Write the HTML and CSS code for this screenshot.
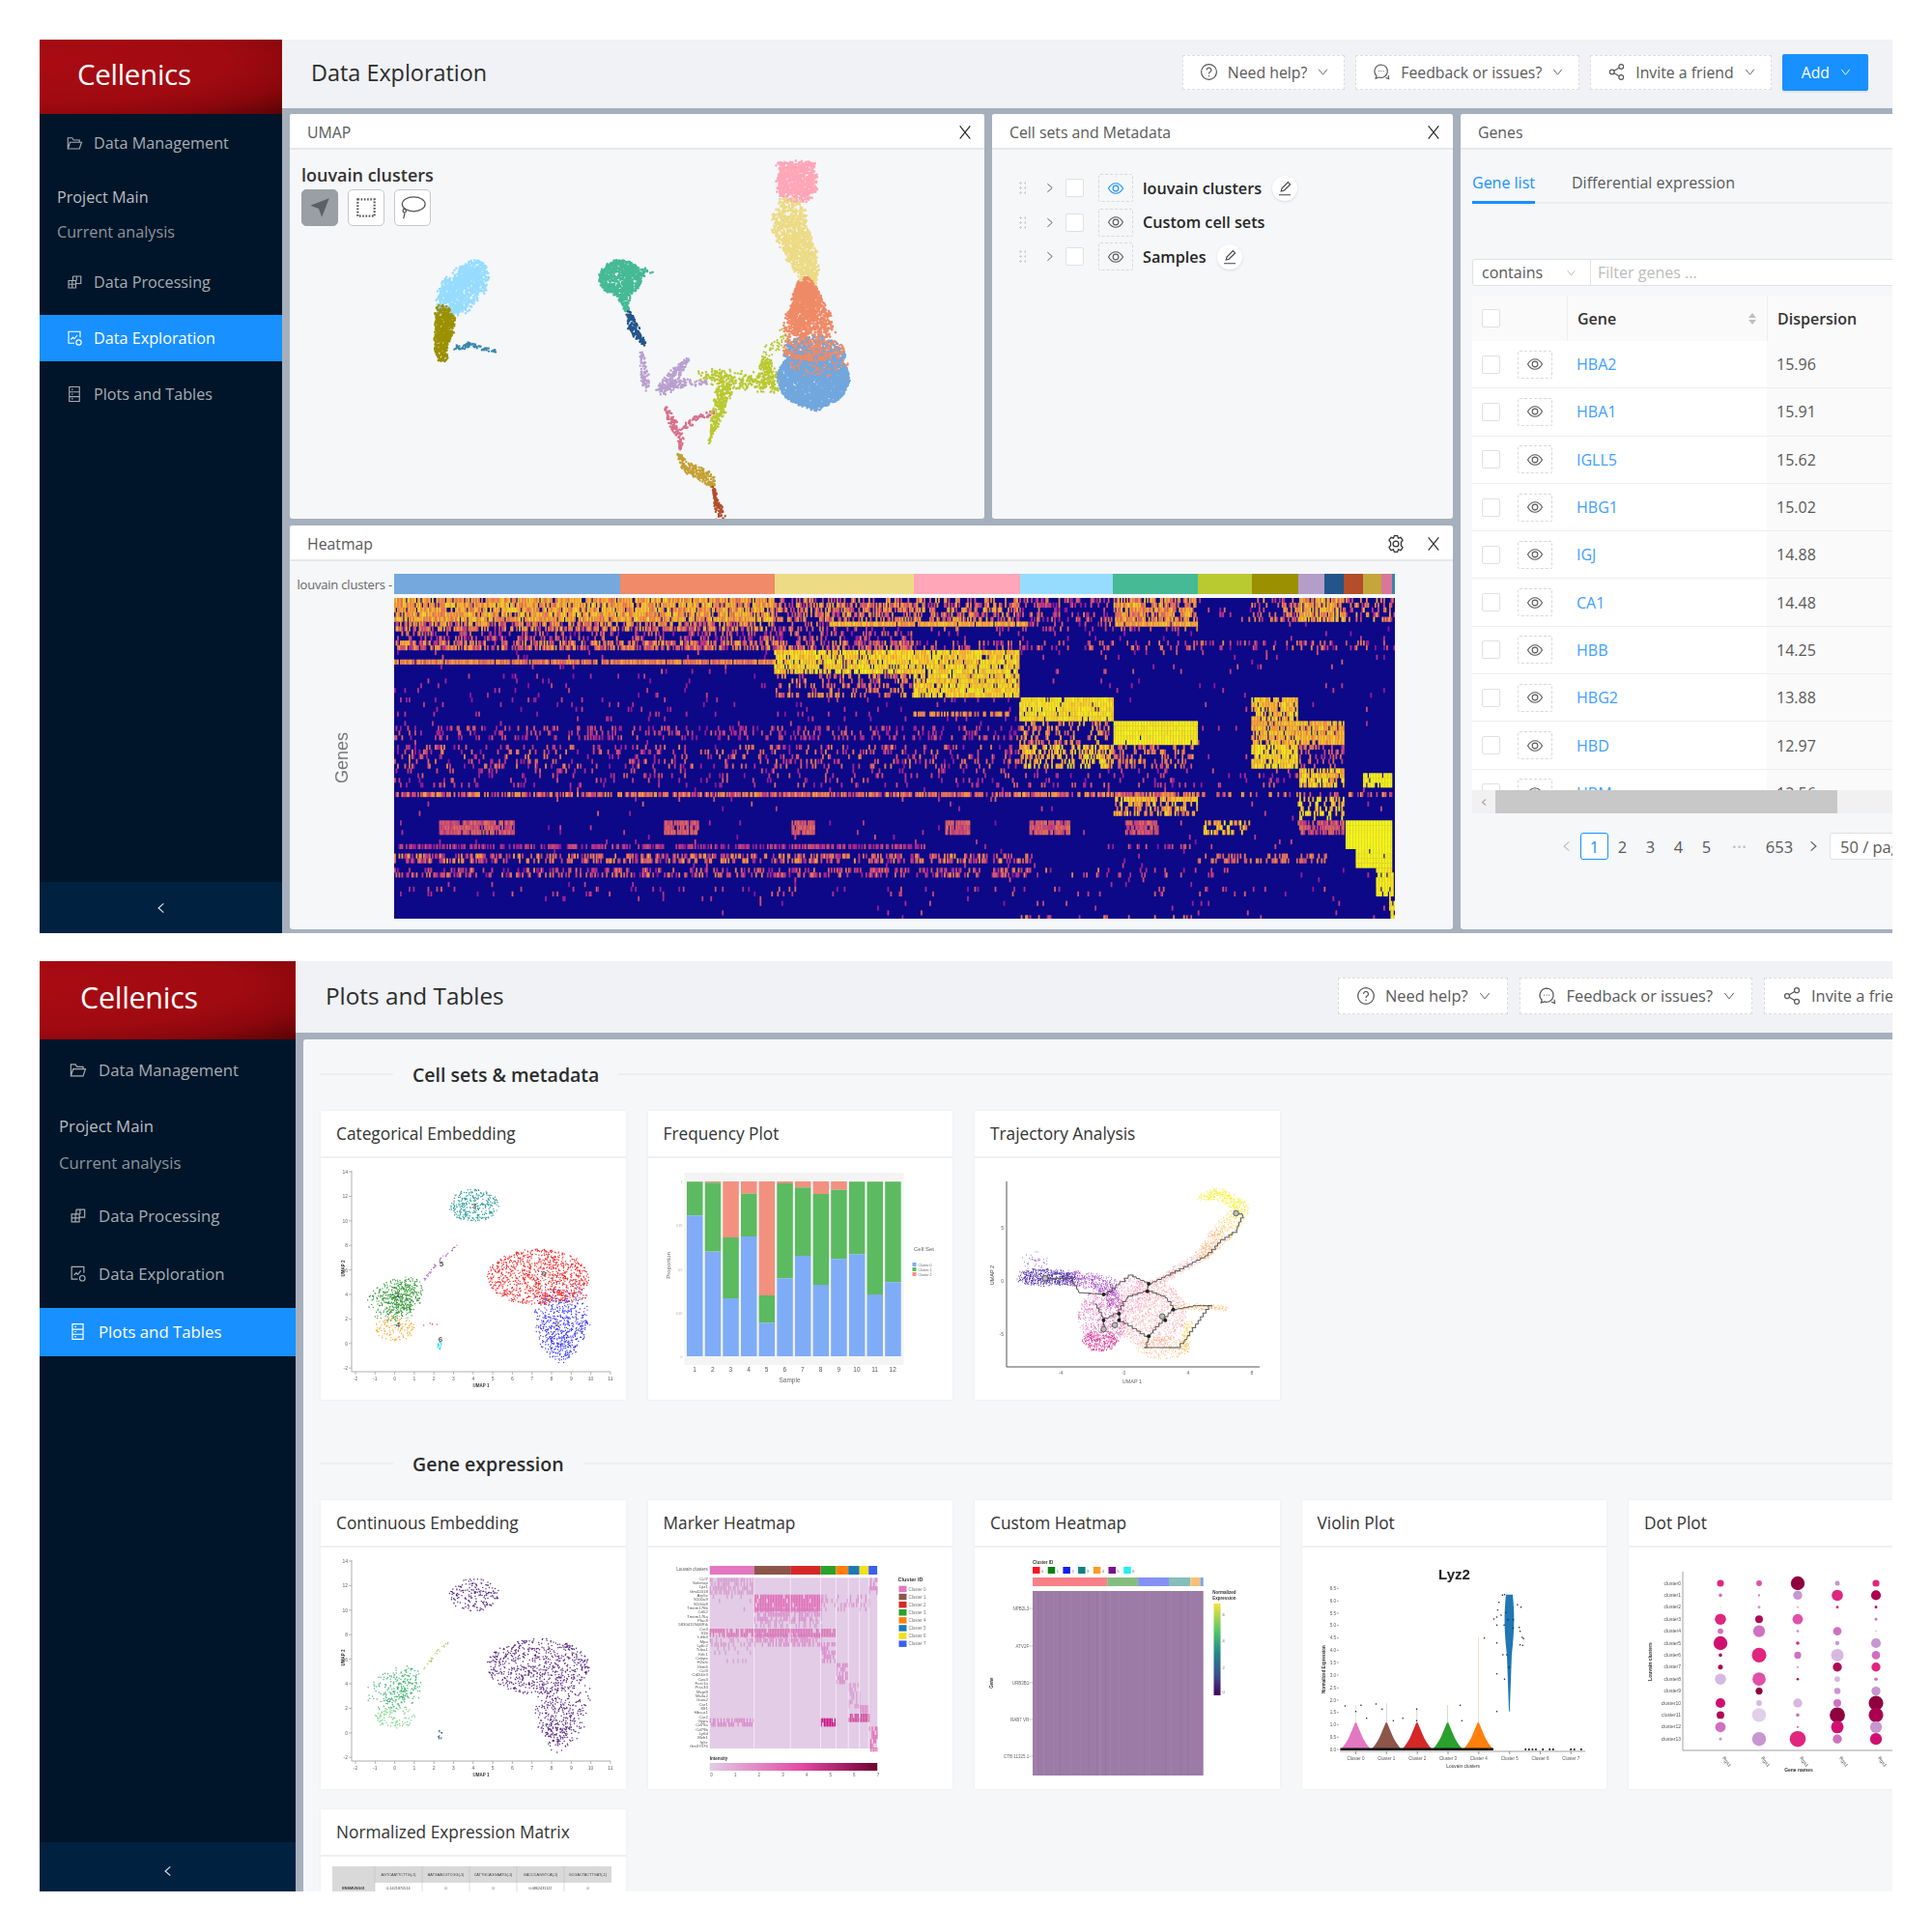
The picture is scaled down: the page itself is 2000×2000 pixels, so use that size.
FILE: index.html
```html
<!DOCTYPE html>
<html lang="en">
<head>
<meta charset="utf-8">
<title>Cellenics</title>
<link rel="stylesheet" href="styles.css">
</head>
<body>
<svg class="sprite" aria-hidden="true">
  <symbol id="i-folder" viewBox="0 0 24 24"><path d="M3 20V5h6l2 3h8v3M3 20l3-9h16l-3 9z"/></symbol>
  <symbol id="i-build" viewBox="0 0 24 24"><path d="M10 4h11v10h-7M10 4v6M15 4v6M4 10h10v10H4zM9 10v10M4 15h10"/></symbol>
  <symbol id="i-explore" viewBox="0 0 24 24"><path d="M20 11V3H4v16h8M7 14l3-3 2 2 4-5"/><circle cx="18" cy="18" r="3.5"/></symbol>
  <symbol id="i-db" viewBox="0 0 24 24"><path d="M5 2h14v20H5zM5 9h14M5 15.500h14M8 5.500h2M8 12h2M8 18.500h2"/></symbol>
  <symbol id="i-question" viewBox="0 0 24 24"><circle cx="12" cy="12" r="10"/><path d="M9 9.500a3 3 0 1 1 4.500 2.600c-1 .6-1.500 1.200-1.500 2.400M12 16.500v1.500"/></symbol>
  <symbol id="i-comment" viewBox="0 0 24 24"><path d="M11 2.500a8.500 8.500 0 0 0-6 14.500l-1 3.500 4-1.500A8.500 8.500 0 1 0 11 2.500z"/><path d="M7.500 11h1M10.500 11h1M13.500 11h1M17 19.500l4 1.500-.5-4.500"/></symbol>
  <symbol id="i-share" viewBox="0 0 24 24"><circle cx="18" cy="5" r="3" /><circle cx="6" cy="12" r="3"/><circle cx="18" cy="19" r="3"/><path d="M8.300 10.700l7.400-4.400M8.300 13.300l7.400 4.400"/></symbol>
  <symbol id="i-down" viewBox="0 0 24 24"><path d="M4 7l8 10 8-10"/></symbol>
  <symbol id="i-right" viewBox="0 0 24 24"><path d="M8 4l9 8-9 8"/></symbol>
  <symbol id="i-left" viewBox="0 0 24 24"><path d="M16 4l-9 8 9 8"/></symbol>
  <symbol id="i-close" viewBox="0 0 24 24"><path d="M4 2l16 20M20 2L4 22"/></symbol>
  <symbol id="i-eye" viewBox="0 0 24 24"><path d="M2 12c3-5 6-7 10-7s7 2 10 7c-3 5-6 7-10 7s-7-2-10-7z"/><circle cx="12" cy="12" r="3.800"/></symbol>
  <symbol id="i-edit" viewBox="0 0 24 24"><path d="M7 16l1-4 8.500-8.500 3 3L11 15zM4 21h16"/></symbol>
  <symbol id="i-gear" viewBox="0 0 24 24"><path d="M10 2h4l1 3 3-1 2.500 3.500-2 2.500 0 4 2 2.500L18 20l-3-1-1 3h-4l-1-3-3 1-2.500-3.500 2-2.500 0-4-2-2.500L6 4l3 1z"/><circle cx="12" cy="12" r="3.500"/></symbol>
  <symbol id="i-lasso" viewBox="0 0 24 24"><ellipse cx="13" cy="9" rx="9.500" ry="6"/><path d="M5 12.500c-1.500 1.500-1 3.500.5 3.500s2-2-.5-3.500M5.500 16c0 2-.5 3.500-1 5"/></symbol>
</svg>

<div class="page">

  <section class="app app--a">
    <aside class="sider">
      <div class="logo">Cellenics</div>
      <nav class="menu">
        <a class="item"><svg class="ic"><use href="#i-folder"/></svg>Data Management</a>
        <div class="group">Project Main</div>
        <div class="group group--sub">Current analysis</div>
        <a class="item item--first"><svg class="ic"><use href="#i-build"/></svg>Data Processing</a>
        <a class="item item--on"><svg class="ic"><use href="#i-explore"/></svg>Data Exploration</a>
        <a class="item"><svg class="ic"><use href="#i-db"/></svg>Plots and Tables</a>
      </nav>
      <div class="trigger"><svg class="ic ic--trig"><use href="#i-left"/></svg></div>
    </aside>
    <div class="main">
      <header class="topbar">
        <h1 class="title">Data Exploration</h1>
        <div class="actions">
          <button class="btn"><svg class="ic"><use href="#i-question"/></svg>Need help?<svg class="ic ic--down"><use href="#i-down"/></svg></button>
          <button class="btn"><svg class="ic"><use href="#i-comment"/></svg>Feedback or issues?<svg class="ic ic--down"><use href="#i-down"/></svg></button>
          <button class="btn"><svg class="ic"><use href="#i-share"/></svg>Invite a friend<svg class="ic ic--down"><use href="#i-down"/></svg></button>
          <button class="btn btn--primary">Add<svg class="ic ic--down"><use href="#i-down"/></svg></button>
        </div>
      </header>
      <div class="mosaic">
        <article class="panel">
          <div class="panel-head"><span>UMAP</span><svg class="ic ic--close"><use href="#i-close"/></svg></div>
          <div class="panel-body umap">
            <div class="plot" data-plot="umap"></div>
            <div class="umap-over">
              <div class="umap-title">louvain clusters</div>
              <div class="tools">
                <span class="tool tool--on"><svg viewBox="0 0 24 24" class="tool-ic"><path class="solid" d="M21 3L3 10l8 3 3 8z"/></svg></span>
                <span class="tool"><svg viewBox="0 0 24 24" class="tool-ic"><rect class="dotted" x="4" y="4" width="16" height="16"/></svg></span>
                <span class="tool"><svg class="ic ic--tool"><use href="#i-lasso"/></svg></span>
              </div>
            </div>
          </div>
        </article>

        <article class="panel">
          <div class="panel-head"><span>Cell sets and Metadata</span><svg class="ic ic--close"><use href="#i-close"/></svg></div>
          <div class="panel-body tree">
            <div class="tree-row">
              <span class="drag"></span><svg class="ic ic--arrow"><use href="#i-right"/></svg><span class="check"></span>
              <span class="eye eye--tree eye--on"><svg class="ic"><use href="#i-eye"/></svg></span><b>louvain clusters</b>
              <span class="pen"><svg class="ic"><use href="#i-edit"/></svg></span>
            </div>
            <div class="tree-row">
              <span class="drag"></span><svg class="ic ic--arrow"><use href="#i-right"/></svg><span class="check"></span>
              <span class="eye eye--tree"><svg class="ic"><use href="#i-eye"/></svg></span><b>Custom cell sets</b>
            </div>
            <div class="tree-row">
              <span class="drag"></span><svg class="ic ic--arrow"><use href="#i-right"/></svg><span class="check"></span>
              <span class="eye eye--tree"><svg class="ic"><use href="#i-eye"/></svg></span><b>Samples</b>
              <span class="pen"><svg class="ic"><use href="#i-edit"/></svg></span>
            </div>
          </div>
        </article>

        <article class="panel panel--genes">
          <div class="panel-head"><span>Genes</span></div>
          <div class="panel-body genes">
            <div class="tabs"><span class="tab tab--on">Gene list</span><span class="tab">Differential expression</span></div>
            <div class="filter">
              <span class="select">contains<svg class="ic ic--down"><use href="#i-down"/></svg></span>
              <span class="input">Filter genes ...</span>
            </div>
            <div class="gtable">
              <div class="grow grow--head">
                <span class="cell"><span class="check"></span></span><span class="cell"></span>
                <span class="cell cell--gene">Gene<span class="sorter"><i></i><i></i></span></span>
                <span class="cell cell--disp">Dispersion</span>
              </div>
              <div class="grow"><span class="cell"><span class="check"></span></span><span class="cell"><span class="eye"><svg class="ic"><use href="#i-eye"/></svg></span></span><a class="cell cell--gene">HBA2</a><span class="cell cell--disp">15.96</span></div>
              <div class="grow"><span class="cell"><span class="check"></span></span><span class="cell"><span class="eye"><svg class="ic"><use href="#i-eye"/></svg></span></span><a class="cell cell--gene">HBA1</a><span class="cell cell--disp">15.91</span></div>
              <div class="grow"><span class="cell"><span class="check"></span></span><span class="cell"><span class="eye"><svg class="ic"><use href="#i-eye"/></svg></span></span><a class="cell cell--gene">IGLL5</a><span class="cell cell--disp">15.62</span></div>
              <div class="grow"><span class="cell"><span class="check"></span></span><span class="cell"><span class="eye"><svg class="ic"><use href="#i-eye"/></svg></span></span><a class="cell cell--gene">HBG1</a><span class="cell cell--disp">15.02</span></div>
              <div class="grow"><span class="cell"><span class="check"></span></span><span class="cell"><span class="eye"><svg class="ic"><use href="#i-eye"/></svg></span></span><a class="cell cell--gene">IGJ</a><span class="cell cell--disp">14.88</span></div>
              <div class="grow"><span class="cell"><span class="check"></span></span><span class="cell"><span class="eye"><svg class="ic"><use href="#i-eye"/></svg></span></span><a class="cell cell--gene">CA1</a><span class="cell cell--disp">14.48</span></div>
              <div class="grow"><span class="cell"><span class="check"></span></span><span class="cell"><span class="eye"><svg class="ic"><use href="#i-eye"/></svg></span></span><a class="cell cell--gene">HBB</a><span class="cell cell--disp">14.25</span></div>
              <div class="grow"><span class="cell"><span class="check"></span></span><span class="cell"><span class="eye"><svg class="ic"><use href="#i-eye"/></svg></span></span><a class="cell cell--gene">HBG2</a><span class="cell cell--disp">13.88</span></div>
              <div class="grow"><span class="cell"><span class="check"></span></span><span class="cell"><span class="eye"><svg class="ic"><use href="#i-eye"/></svg></span></span><a class="cell cell--gene">HBD</a><span class="cell cell--disp">12.97</span></div>
              <div class="grow"><span class="cell"><span class="check"></span></span><span class="cell"><span class="eye"><svg class="ic"><use href="#i-eye"/></svg></span></span><a class="cell cell--gene">HBM</a><span class="cell cell--disp">12.56</span></div>
            </div>
            <div class="hscroll"><svg class="ic ic--sb"><use href="#i-left"/></svg><span class="thumb"></span></div>
            <div class="pager">
              <svg class="ic ic--pg ic--off"><use href="#i-left"/></svg>
              <span class="pg pg--on">1</span><span class="pg">2</span><span class="pg">3</span><span class="pg">4</span><span class="pg">5</span>
              <span class="pg pg--dots">•••</span><span class="pg pg--wide">653</span>
              <svg class="ic ic--pg"><use href="#i-right"/></svg>
              <span class="pgsize">50 / page</span>
            </div>
          </div>
        </article>

        <article class="panel panel--heat">
          <div class="panel-head"><span>Heatmap</span><svg class="ic ic--gear"><use href="#i-gear"/></svg><svg class="ic ic--close"><use href="#i-close"/></svg></div>
          <div class="panel-body hm">
            <div class="hm-label">louvain clusters -</div>
            <div class="hm-bar" data-plot="hmbar"></div>
            <div class="hm-axis"><span>Genes</span></div>
            <canvas class="hm-canvas" id="heat" width="1036" height="332"></canvas>
          </div>
        </article>
      </div>
    </div>
  </section>

  <section class="app app--b">
    <aside class="sider">
      <div class="logo">Cellenics</div>
      <nav class="menu">
        <a class="item"><svg class="ic"><use href="#i-folder"/></svg>Data Management</a>
        <div class="group">Project Main</div>
        <div class="group group--sub">Current analysis</div>
        <a class="item item--first"><svg class="ic"><use href="#i-build"/></svg>Data Processing</a>
        <a class="item"><svg class="ic"><use href="#i-explore"/></svg>Data Exploration</a>
        <a class="item item--on"><svg class="ic"><use href="#i-db"/></svg>Plots and Tables</a>
      </nav>
      <div class="trigger"><svg class="ic ic--trig"><use href="#i-left"/></svg></div>
    </aside>
    <div class="main">
      <header class="topbar">
        <h1 class="title">Plots and Tables</h1>
        <div class="actions">
          <button class="btn"><svg class="ic"><use href="#i-question"/></svg>Need help?<svg class="ic ic--down"><use href="#i-down"/></svg></button>
          <button class="btn"><svg class="ic"><use href="#i-comment"/></svg>Feedback or issues?<svg class="ic ic--down"><use href="#i-down"/></svg></button>
          <button class="btn"><svg class="ic"><use href="#i-share"/></svg>Invite a friend<svg class="ic ic--down"><use href="#i-down"/></svg></button>
          <button class="btn btn--primary">Add<svg class="ic ic--down"><use href="#i-down"/></svg></button>
        </div>
      </header>
      <div class="gallery-wrap">
        <div class="gallery">
          <div class="divider"><span>Cell sets &amp; metadata</span></div>
          <div class="cards">
            <article class="card"><h3>Categorical Embedding</h3><div class="card-body plot" data-plot="cat"></div></article>
            <article class="card"><h3>Frequency Plot</h3><div class="card-body plot" data-plot="freq"></div></article>
            <article class="card"><h3>Trajectory Analysis</h3><div class="card-body plot" data-plot="traj"></div></article>
          </div>
          <div class="divider divider--2"><span>Gene expression</span></div>
          <div class="cards">
            <article class="card"><h3>Continuous Embedding</h3><div class="card-body plot" data-plot="cont"></div></article>
            <article class="card"><h3>Marker Heatmap</h3><div class="card-body plot" data-plot="marker"></div></article>
            <article class="card"><h3>Custom Heatmap</h3><div class="card-body plot" data-plot="custom"></div></article>
            <article class="card"><h3>Violin Plot</h3><div class="card-body plot" data-plot="violin"></div></article>
            <article class="card"><h3>Dot Plot</h3><div class="card-body plot" data-plot="dot"></div></article>
            <article class="card"><h3>Normalized Expression Matrix</h3><div class="card-body plot" data-plot="matrix"></div></article>
          </div>
        </div>
      </div>
    </div>
  </section>

</div>
<script src="script.js"></script>
</body>
</html>
```

FILE: styles.css
```css
* { box-sizing: border-box; }
html, body { margin: 0; padding: 0; background: #fff; }
body { font-family: "Open Sans", "Noto Sans", "Liberation Sans", sans-serif; color: #595959; }
.sprite { position: absolute; width: 0; height: 0; overflow: hidden; }
.page { display: flex; flex-direction: column; gap: 29px; padding: 41px 41px 0; width: 2000px; }

.app { display: flex; width: 1918px; overflow: hidden; background: #a6b0bd; filter: blur(.3px); }
.app--a { height: 925px; --sider: 251px; --logo: 77px; --item: 48px; --font: 16.2px; --group: 36px; --menu-gap: 10px; --top: 6px; --gpad: 18px; --item-pad: 27px; --item-gap: 11px; --first: 0px; --ic: 18px; }
.app--b { height: 963px; --sider: 265px; --logo: 81px; --item: 50px; --font: 16.8px; --group: 38px; --menu-gap: 10px; --top: 6px; --gpad: 20px; --item-pad: 30px; --item-gap: 12px; --first: 1.500px; --ic: 19px; }

.ic { width: 18px; height: 18px; fill: none; stroke: currentColor; stroke-width: 1.500; flex: none; }

/* side navigation */
.sider { flex: none; width: var(--sider); background: #001529; display: flex; flex-direction: column; }
.logo { height: var(--logo); flex: none; display: flex; align-items: center; padding: 0 0 7px 39px; color: #fff; font-size: 29.500px; letter-spacing: -.3px;
  background: radial-gradient(ellipse at 0% 30%, #a90b13 0%, #a10a11 55%, #8a070c 78%, #5a0306 100%); }
.app--b .logo { padding-left: 42px; font-size: 30.500px; }
.menu { display: flex; flex-direction: column; padding-top: var(--top); gap: var(--menu-gap); font-size: var(--font); }
.item { height: var(--item); display: flex; align-items: center; gap: var(--item-gap); padding-left: var(--item-pad); color: #a6adb4; }
.item .ic { width: var(--ic); height: var(--ic); }
.item--on { background: #1890ff; color: #fff; }
.group { height: var(--group); display: flex; align-items: center; padding-left: var(--gpad); color: #b9bdc2; margin: 4px 0 -10px; }
.group--sub { color: #8d949c; margin-top: 0; margin-bottom: 0; }
.item--first { margin-top: var(--first); }
.trigger { margin-top: auto; height: 53px; background: #002140; display: flex; align-items: center; justify-content: center; color: #dbe0e5; }
.app--b .trigger { padding-top: 8px; height: 51px; }
.ic--trig { width: 14px; height: 14px; stroke-width: 2; }

/* header */
.main { flex: 1; min-width: 0; display: flex; flex-direction: column; }
.topbar { flex: none; height: 71px; display: flex; align-items: center; background: #f0f2f5; padding: 0 25px 3px 30px; }
.app--b .topbar { height: 74px; padding: 0 0 3px 31px; }
.title { margin: 0; font-size: 23.400px; font-weight: 400; color: #2c2c2c; flex: 1; }
.app--b .title { flex: 0 0 1048px; font-size: 24.300px; }
.actions { display: flex; gap: 11px; flex: none; }
.app--b .actions { gap: 12px; }
.btn { height: 36px; display: flex; align-items: center; gap: 10px; padding: 0 15px 0 17px; background: #fff; border: 1px dashed #dcdcdc; color: #595959; font: inherit; font-size: 15.800px; white-space: nowrap; }
.btn .ic { width: 19px; height: 19px; }
.btn .ic--down { width: 13px; height: 13px; stroke-width: 1.700; }
.btn--primary { background: #1890ff; border: 0; color: #fff; height: 38px; border-radius: 2px; padding: 0 17px 0 20px; margin-top: -1px; box-shadow: 0 2px 0 rgba(0,0,0,.05); }
.app--b .btn { height: 38px; font-size: 16.400px; gap: 10px; padding: 0 16px 0 18px; }
.app--b .btn .ic { width: 20px; height: 20px; }
.app--b .btn .ic--down { width: 14px; height: 14px; }
.ic--down { width: 12px; height: 12px; stroke-width: 1.800; }

/* mosaic */
.mosaic { flex: 1; min-height: 0; padding: 6px 0 4px 8px; display: grid; grid-template-columns: 719px 477px 480px; grid-template-rows: 419px 418px; gap: 7px 8px; }
.panel { display: flex; flex-direction: column; background: #f5f7f9; border-radius: 3px; overflow: hidden; min-width: 0; }
.panel--genes { grid-column: 3; grid-row: 1 / 3; }
.panel--heat { grid-column: 1 / 3; grid-row: 2; }
.panel-head { flex: none; height: 37px; background: #fff; border-bottom: 2px solid #e6e8ea; display: flex; align-items: center; padding: 2px 12px 0 18px; font-size: 15.800px; color: #595959; }
.panel-head span { flex: 1; }
.ic--close { width: 16px; height: 16px; color: #222; stroke-width: 1.700; }
.ic--gear { width: 20px; height: 22px; margin-right: 21px; color: #333; stroke-width: 1.500; }
.panel-body { flex: 1; min-height: 0; position: relative; }

/* plots */
.plot { filter: blur(.2px); }
.plot svg { display: block; width: 100%; height: 100%; }
.umap .plot { height: 100%; }
.umap-over { position: absolute; left: 12px; top: 12px; }
.umap-title { font-size: 18px; font-weight: 600; color: #333; line-height: 28px; }
.tools { display: flex; gap: 10px; margin-top: 1px; }
.tool { width: 38px; height: 38px; background: #fff; border: 1px solid #c4c7cb; border-radius: 5px; display: flex; align-items: center; justify-content: center; color: #555; }
.tool--on { background: #9a9ea5; border-color: #9a9ea5; }
.tool-ic { width: 26px; height: 26px; }
.solid { fill: #5c6065; }
.dotted { fill: none; stroke: #555; stroke-width: 2; stroke-dasharray: 1.500 1.500; }
.ic--tool { width: 30px; height: 30px; stroke-width: 1; }

/* tree */
.tree { padding: 22px 0 0 22px; display: flex; flex-direction: column; gap: 0; }
.tree-row { height: 35.500px; display: flex; align-items: center; font-size: 16.200px; color: #262626; }
.tree-row b { font-weight: 600; margin-left: 10px; }
.drag { width: 8px; height: 15px; flex: none; margin-left: 5px; background-image: radial-gradient(circle, #cfd2d6 1.200px, transparent 1.400px); background-size: 5px 5px; }
.ic--arrow { width: 13px; height: 13px; margin: 0 10px 0 18px; color: #555; stroke-width: 1.700; }
.check { display: block; width: 19px; height: 19px; background: #fff; border: 1px solid #dfe1e4; border-radius: 2px; flex: none; }
.eye { display: flex; align-items: center; justify-content: center; width: 36px; height: 29px; border: 1px dashed #d9d9d9; background: #fff; color: #595959; border-radius: 2px; }
.eye .ic { width: 18px; height: 18px; }
.eye--tree { margin-left: 15px; background: transparent; }
.eye--on { color: #1890ff; }
.pen { width: 26px; height: 26px; margin-left: 11px; border-radius: 50%; background: #fff; box-shadow: 0 1px 3px rgba(0,0,0,.12); display: flex; align-items: center; justify-content: center; color: #444; }
.pen .ic { width: 18px; height: 18px; }

/* genes */
.genes { padding: 0 0 0 12px; font-size: 16px; }
.tabs { height: 56px; display: flex; align-items: flex-end; gap: 38px; border-bottom: 2px solid #eceef0; }
.tab { height: 56px; display: flex; align-items: center; padding-top: 16px; color: #595959; }
.tab--on { color: #1890ff; border-bottom: 3px solid #1890ff; margin-bottom: -2px; height: 58px; }
.filter { display: flex; height: 28px; margin-top: 57px; background: #fff; border: 1px solid #dfe1e4; border-radius: 3px; }
.select { width: 122px; display: flex; align-items: center; justify-content: space-between; padding: 0 14px 0 9px; border-right: 1px solid #dfe1e4; }
.select .ic--down { color: #aaa; width: 11px; height: 11px; }
.input { display: flex; align-items: center; padding-left: 7px; color: #bcbcbc; }
.gtable { height: 512px; margin-top: 10px; overflow: hidden; }
.grow { height: 49.300px; display: grid; grid-template-columns: 47px 51px 207px 180px; border-bottom: 1px solid #eeeeee; background: #fff; align-items: stretch; }
.grow--head { height: 47px; background: #fafafa; border: 0; font-weight: 600; color: #333; }
.cell { display: flex; align-items: center; }
.cell:first-child { padding-left: 10px; }
.cell--gene { padding-left: 10px; color: #40a0ff; position: relative; }
.cell--disp { padding-left: 10px; background: #fafafa; color: #595959; }
.grow--head .cell--gene { color: #333; border-left: 1px solid #eee; }
.grow--head .cell--disp { border-left: 1px solid #eee; color: #333; }
.sorter { position: absolute; right: 11px; top: 50%; transform: translateY(-50%); display: flex; flex-direction: column; gap: 2px; }
.sorter i { display: block; border-left: 4px solid transparent; border-right: 4px solid transparent; border-bottom: 5px solid #bfbfbf; }
.sorter i + i { border-bottom: 0; border-top: 5px solid #bfbfbf; }
.hscroll { height: 24px; background: #f1f1f1; display: flex; align-items: center; padding-left: 8px; color: #aaa; }
.ic--sb { width: 9px; height: 9px; stroke-width: 3.500; }
.thumb { display: block; height: 24px; width: 354px; background: #c8c8c8; margin-left: 7px; }
.pager { display: flex; align-items: center; height: 28px; margin-top: 20px; padding-left: 84px; white-space: nowrap; font-size: 16.500px; }
.pg { width: 29px; height: 28px; display: flex; align-items: center; justify-content: center; color: #595959; flex: none; }
.pg--on { border: 1px solid #1890ff; border-radius: 3px; color: #1890ff; background: #fff; }
.pg--dots { width: 40px; font-size: 11px; color: #bfbfbf; letter-spacing: 1px; }
.pg--wide { width: 42px; }
.ic--pg { width: 14px; height: 14px; margin: 0 7px; stroke-width: 2; }
.ic--off { color: #bfbfbf; }
.pgsize { margin-left: 3px; height: 28px; padding: 0 10px; display: flex; align-items: center; background: #fff; border: 1px solid #dfe1e4; border-radius: 3px; flex: none; }

/* heatmap */
.hm { display: grid; grid-template-columns: 108px 1036px; grid-template-rows: 21px 332px; row-gap: 4px; padding-top: 13px; align-content: start; }
.hm-label { font-size: 13px; color: #666; display: flex; align-items: center; justify-content: flex-end; white-space: nowrap; padding-right: 2px; letter-spacing: -.2px; }
.hm-bar { display: flex; }
.hm-bar span { display: block; height: 100%; }
.hm-axis { display: flex; align-items: center; justify-content: flex-start; padding-left: 44px; }
.hm-axis span { display: block; writing-mode: vertical-rl; transform: rotate(180deg); font: 18px "Liberation Sans", sans-serif; color: #777; }
.hm-canvas { display: block; width: 1036px; height: 332px; }

/* gallery */
.gallery-wrap { flex: 1; min-height: 0; padding: 7px 0 0 8px; }
.gallery { height: 100%; background: #f5f7f9; overflow: hidden; padding: 21px 0 0 18px; border-radius: 3px 0 0 0; }
.divider { height: 30px; display: flex; align-items: center; font-size: 19.500px; font-weight: 600; color: #2c2c2c; white-space: nowrap; }
.divider::before { content: ""; width: 75px; border-top: 2px solid #eceef0; flex: none; }
.divider::after { content: ""; flex: 1; border-top: 2px solid #eceef0; }
.divider span { padding: 0 20px; }
.divider--2 { margin-top: 51px; }
.cards { display: grid; grid-template-columns: repeat(5, 315.500px); gap: 21px 23px; margin-top: 23px; }
.divider--2 + .cards { margin-top: 23px; }
.card { height: 299px; display: flex; flex-direction: column; background: #fff; box-shadow: 0 0 3px rgba(0,0,0,.05); }
.card h3 { margin: 0; height: 49px; flex: none; padding-left: 16px; display: flex; align-items: center; border-bottom: 2px solid #f0f0f0; font-size: 17.300px; font-weight: 400; color: #333; white-space: nowrap; }
.card-body { flex: 1; min-height: 0; overflow: hidden; }
```

FILE: script.js
```js
(function () {
  var seed = 7;
  function rnd() { seed |= 0; seed = seed + 0x6D2B79F5 | 0; var t = Math.imul(seed ^ seed >>> 15, 1 | seed); t = t + Math.imul(t ^ t >>> 7, 61 | t) ^ t; return ((t ^ t >>> 14) >>> 0) / 4294967296; }
  function f(n) { return Math.round(n * 10) / 10; }

  function chain(pts, n) {
    var segs = [], total = 0, i;
    for (i = 0; i < pts.length - 1; i++) {
      var a = pts[i], b = pts[i + 1], w = (Math.hypot(b[0] - a[0], b[1] - a[1]) + 1) * ((a[2] + b[2]) / 2 + .5);
      segs.push([a, b, w]); total += w;
    }
    var out = [];
    for (i = 0; i < n; i++) {
      var r = rnd() * total, s = segs[0];
      for (var j = 0; j < segs.length; j++) { s = segs[j]; r -= s[2]; if (r <= 0) break; }
      var t = rnd(), R = s[0][2] + (s[1][2] - s[0][2]) * t, ang = rnd() * 6.283, d = Math.sqrt(rnd()) * R;
      out.push([s[0][0] + (s[1][0] - s[0][0]) * t + Math.cos(ang) * d, s[0][1] + (s[1][1] - s[0][1]) * t + Math.sin(ang) * d]);
    }
    return out;
  }
  function ell(cx, cy, rx, ry, n) {
    var o = [];
    for (var i = 0; i < n; i++) { var a = rnd() * 6.283, d = Math.sqrt(rnd()); o.push([cx + Math.cos(a) * d * rx, cy + Math.sin(a) * d * ry]); }
    return o;
  }
  function box(x0, y0, x1, y1, n, jit) {
    var o = [];
    for (var i = 0; i < n; i++) {
      var dx = (rnd() + rnd() - 1) * (jit || 0), dy = (rnd() + rnd() - 1) * (jit || 0) * .5;
      o.push([x0 + rnd() * (x1 - x0) + dx, y0 + rnd() * (y1 - y0) + dy]);
    }
    return o;
  }
  function dots(color, r, pts, op) {
    var d = '';
    pts.forEach(function (p) { d += 'M' + f(p[0]) + ' ' + f(p[1]) + 'h0'; });
    return '<path d="' + d + '" fill="none" stroke="' + color + '" stroke-width="' + (2 * r) + '" stroke-linecap="round"' + (op ? ' opacity="' + op + '"' : '') + '/>';
  }
  function txt(x, y, s, size, anchor, fill, rot, weight) {
    return '<text x="' + f(x) + '" y="' + f(y) + '" font-size="' + size + '" text-anchor="' + (anchor || 'start') + '" fill="' + (fill || '#666') + '"' +
      (rot ? ' transform="rotate(' + rot + ' ' + f(x) + ' ' + f(y) + ')"' : '') + (weight ? ' font-weight="' + weight + '"' : '') + ' font-family="Liberation Sans, sans-serif">' + s + '</text>';
  }
  function line(x1, y1, x2, y2, c, w) { return '<line x1="' + f(x1) + '" y1="' + f(y1) + '" x2="' + f(x2) + '" y2="' + f(y2) + '" stroke="' + (c || '#888') + '" stroke-width="' + (w || 1) + '"/>'; }
  function rect(x, y, w, h, c, o) { return '<rect x="' + f(x) + '" y="' + f(y) + '" width="' + f(w) + '" height="' + f(h) + '" fill="' + c + '"' + (o ? ' opacity="' + o + '"' : '') + '/>'; }
  function put(name, ox, oy, inner) {
    var host = document.querySelector('[data-plot="' + name + '"]');
    if (!host) return;
    host.innerHTML = '<svg xmlns="http://www.w3.org/2000/svg"><g transform="translate(' + (-ox) + ' ' + (-oy) + ')">' + inner + '</g></svg>';
  }

  /* UMAP ------------------------------------------------------- */
  var u = '';
  u += dots('#96dcff', 1.3, chain([[495, 278, 9], [487, 290, 20], [472, 306, 21], [462, 320, 10]], 1000));
  u += dots('#9a9000', 1.3, chain([[458, 322, 8], [461, 337, 13], [456, 355, 7], [458, 372, 6]], 560));
  u += dots('#3a86ad', 1.2, chain([[471, 360, 2], [487, 357, 4], [515, 364, 1]], 60));
  u += dots('#45ba94', 1.3, ell(642, 288, 22, 19, 750));
  u += dots('#45ba94', 1.3, chain([[650, 282, 6], [673, 282, 4]], 60));
  u += dots('#45ba94', 1.3, chain([[645, 305, 8], [649, 322, 2]], 90));
  u += dots('#22558a', 1.2, chain([[651, 325, 3], [656, 340, 6], [666, 355, 3]], 150));
  u += dots('#b9a0cf', 1.2, chain([[664, 365, 2], [667, 385, 5], [668, 402, 4]], 90));
  u += dots('#b9a0cf', 1.2, chain([[684, 405, 6], [695, 392, 7], [712, 372, 2]], 190));
  u += dots('#b9a0cf', 1.2, chain([[684, 405, 5], [705, 397, 5], [732, 395, 3]], 110));
  u += dots('#b9c930', 1.2, chain([[728, 388, 8], [760, 393, 11], [806, 398, 9]], 260));
  u += dots('#b9c930', 1.2, chain([[792, 374, 5], [796, 392, 12]], 120));
  u += dots('#b9c930', 1.2, chain([[752, 394, 10], [743, 430, 7], [737, 448, 2], [733, 462, 1]], 320));
  u += dots('#d9708a', 1.2, chain([[689, 420, 2], [697, 440, 5], [705, 452, 4], [704, 466, 1]], 120));
  u += dots('#d9708a', 1.2, chain([[707, 445, 3], [720, 433, 4], [739, 427, 2]], 60));
  u += dots('#c4a033', 1.2, chain([[702, 470, 2], [712, 485, 6], [732, 493, 8], [738, 503, 2]], 210));
  u += dots('#b34d2a', 1.2, chain([[738, 503, 1], [742, 520, 3], [745, 534, 7]], 120));
  u += dots('#ffa6b8', 1.3, box(806, 168, 844, 200, 760, 4));
  u += dots('#ffa6b8', 1.3, ell(824, 203, 17, 8, 120));
  u += dots('#ecdb85', 1.3, chain([[818, 218, 17], [816, 235, 19], [832, 268, 16], [838, 287, 10], [838, 296, 5]], 1150));
  u += dots('#71a7dd', 1.4, ell(842, 392, 37, 30, 2600));
  u += dots('#71a7dd', 1.4, ell(842, 368, 33, 14, 300));
  u += dots('#ef8a66', 1.3, chain([[834, 295, 9], [836, 327, 22], [838, 345, 29]], 1500));
  u += dots('#ef8a66', 1.2, ell(842, 362, 32, 12, 320));
  u += dots('#71a7dd', 1.2, ell(842, 358, 30, 10, 90));
  u += dots('#ef8a66', 1.2, ell(848, 378, 30, 12, 70));
  u += dots('#71a7dd', 1.2, chain([[880, 392, 3], [846, 424, 3], [812, 408, 3]], 120));
  u += dots('#b9c930', 1.1, chain([[812, 345, 6], [795, 370, 10]], 40));
  put('umap', 300, 155, u);

  /* Heatmap colour bar ------------------------------------------ */
  var edges = [152, 452, 658, 843, 984, 1108, 1221, 1293, 1354, 1389, 1415, 1441, 1465, 1479, 1483];
  var cols = ['#75a8dc', '#f08a68', '#eddb85', '#ffa6b8', '#96dcff', '#45ba94', '#b9c930', '#9a9000', '#b49dc9', '#22558a', '#b34d2a', '#c4a63a', '#d9769a', '#3a86ad'];
  var bar = document.querySelector('[data-plot="hmbar"]');
  cols.forEach(function (c, i) {
    var s = document.createElement('span');
    s.style.width = ((edges[i + 1] - edges[i]) / 1331 * 100) + '%';
    s.style.background = c;
    bar.appendChild(s);
  });

  /* Heatmap ----------------------------------------------------- */
  var rules = [];
  function X(y0, y1, x0, x1, p, lo, hi) { rules.push([y0, y1, x0, x1, p, lo, hi]); }
  function C(y0, y1, c0, c1, p, lo, hi) { X(y0, y1, edges[c0], edges[c1], p, lo, hi); }
  C(235, 315, 0, 2, .88, .62, .93); C(235, 315, 2, 4, .5, .45, .85); C(235, 315, 4, 5, .3, .3, .7); C(235, 315, 5, 6, .72, .55, .9);
  C(235, 315, 6, 7, .1, .3, .7); C(235, 315, 7, 8, .35, .4, .8); C(235, 315, 8, 10, .75, .6, .92); C(235, 315, 10, 14, .3, .4, .85);
  C(315, 345, 0, 2, .62, .45, .85); C(315, 345, 2, 6, .18, .3, .7); X(312, 328, 730, 995, .94, .68, .9); X(312, 330, 1108, 1221, .92, .68, .9);
  C(345, 360, 0, 3, .3, .3, .7); C(345, 360, 3, 14, .03, .3, .5);
  C(360, 390, 0, 3, .6, .4, .82); C(360, 390, 3, 14, .2, .3, .7);
  C(390, 465, 0, 2, .03, .3, .6); C(390, 465, 2, 4, .88, .78, 1); C(390, 465, 4, 14, .02, .3, .6);
  X(420, 435, 152, 658, .92, .55, .8);
  C(465, 540, 3, 4, .9, .78, 1); C(465, 540, 2, 3, .3, .45, .85); C(465, 540, 0, 2, .035, .3, .5);
  C(540, 620, 4, 5, .95, .84, 1); C(540, 620, 7, 8, .85, .72, .96); C(540, 620, 0, 4, .045, .3, .5); X(590, 603, 843, 970, .7, .6, .8);
  C(620, 695, 5, 6, .99, .93, 1); C(620, 695, 7, 10, .86, .7, .92); C(632, 680, 0, 4, .22, .3, .6); C(620, 695, 4, 5, .3, .45, .85);
  C(695, 770, 4, 5, .5, .7, .98); C(695, 770, 7, 8, .9, .8, 1); C(695, 770, 0, 4, .2, .3, .72); C(695, 770, 5, 6, .28, .5, .8); C(695, 770, 8, 10, .25, .4, .7);
  C(770, 822, 0, 8, .12, .3, .6); C(770, 822, 8, 10, .75, .72, 1); X(780, 820, 1441, 1480, .86, .95, 1);
  C(832, 850, 0, 6, .75, .42, .8); C(832, 850, 6, 14, .32, .4, .85);
  X(850, 865, 1108, 1221, .86, .72, .92); X(865, 905, 1108, 1221, .45, .6, .95); X(850, 920, 1354, 1415, .4, .75, 1); X(850, 920, 152, 1100, .01, .3, .6);
  [[212, 312], [510, 558], [680, 712], [885, 918], [998, 1052], [1125, 1168]].forEach(function (b) { X(925, 972, b[0], b[1], .88, .45, .65); });
  X(925, 972, 1226, 1290, .5, .65, 1); X(925, 972, 1354, 1415, .7, .42, .65);
  X(1002, 1020, 152, 860, .6, .3, .55); X(1002, 1020, 1110, 1230, .25, .3, .6);
  X(1035, 1062, 152, 1000, .55, .35, .8); X(1035, 1062, 1220, 1392, .45, .5, .72);
  X(1075, 1095, 152, 1000, .42, .3, .72); X(1075, 1095, 1000, 1275, .15, .35, .7);
  X(1125, 1155, 152, 1415, .07, .3, .6);
  X(1215, 1232, 984, 1230, .12, .4, .7);
  X(925, 1012, 1417, 1479, 1, .985, 1); X(1012, 1075, 1432, 1479, .96, .96, 1); X(1075, 1155, 1458, 1481, .88, .92, 1);
  X(1155, 1230, 1476, 1483, .7, .9, 1);

  var stops = [[13, 8, 135], [126, 3, 168], [204, 71, 120], [250, 155, 60], [244, 246, 28]];
  function plasma(v) {
    var p = Math.min(.999, v) * 4, i = Math.floor(p), t = p - i, a = stops[i], b = stops[i + 1];
    return 'rgb(' + Math.round(a[0] + (b[0] - a[0]) * t) + ',' + Math.round(a[1] + (b[1] - a[1]) * t) + ',' + Math.round(a[2] + (b[2] - a[2]) * t) + ')';
  }
  var cv = document.getElementById('heat'), g = cv.getContext('2d');
  g.fillStyle = '#0d0887'; g.fillRect(0, 0, 1036, 332);
  var colsN = 690, rowH = 4.9, rows = Math.ceil(332 / rowH), cw = 1036 / colsN, activity = [];
  for (var ca = 0; ca < colsN; ca++) activity.push(.55 + rnd() * .9);
  for (var r = 0; r < rows; r++) {
    var zy = 235 + (r + .5) * rowH * 3, fac = .85 + rnd() * .3;
    for (var c = 0; c < colsN; c++) {
      var zx = 152 + (c + .5) * cw * 1.285, rule = null;
      for (var k = rules.length - 1; k >= 0; k--) {
        var q = rules[k];
        if (zy >= q[0] && zy < q[1] && zx >= q[2] && zx < q[3]) { rule = q; break; }
      }
      var pr = rule ? (rule[4] > .85 ? rule[4] : Math.min(1, rule[4] * fac * activity[c])) : .012 * activity[c], lo = rule ? rule[5] : .3, hi = rule ? rule[6] : .55;
      if (rnd() < pr) {
        g.fillStyle = plasma(lo + rnd() * (hi - lo));
        g.fillRect(c * cw, r * rowH, cw + .3, rowH + .3);
      }
    }
  }

  /* Embedding axes, shared --------------------------------------- */
  function embAxes() {
    var s = line(365, 1212, 365, 1420, '#999', .8) + line(365, 1420, 633, 1420, '#999', .8), i, v;
    for (i = 0; i <= 8; i++) { v = 14 - i * 2; var y = 1213 + i * 25.4; s += line(362, y, 365, y, '#999', .7) + txt(361, y + 2, v, 5, 'end', '#666'); }
    for (i = 0; i <= 13; i++) { var x = 369 + i * 20.3; s += line(x, 1420, x, 1423, '#999', .7) + txt(x, 1429, i - 2, 5, 'middle', '#666'); }
    s += txt(358, 1313, 'UMAP 2', 4.500, 'middle', '#333', -90, 700) + txt(499, 1436, 'UMAP 1', 4.500, 'middle', '#333', 0, 700);
    return s;
  }

  /* Categorical --------------------------------------------------- */
  var a = embAxes();
  a += dots('#2a9a9a', .7, ell(492, 1248, 26, 17, 300));
  a += dots('#f03030', .7, ell(558, 1322, 53, 29, 1050));
  a += dots('#3a3af0', .7, chain([[583, 1352, 30], [582, 1378, 26], [580, 1400, 12]], 620));
  a += dots('#f03030', .7, ell(585, 1342, 25, 6, 80));
  a += dots('#3a3af0', .7, ell(607, 1372, 6, 5, 15));
  a += dots('#3c9c40', .7, chain([[397, 1350, 18], [415, 1344, 23], [425, 1335, 14], [410, 1358, 14]], 560));
  a += dots('#f5b040', .7, ell(410, 1375, 21, 13, 130));
  a += dots('#b06ec0', .7, chain([[440, 1325, 1], [455, 1305, 2], [474, 1290, 1]], 40));
  a += dots('#30e0e8', .8, ell(456, 1393, 3, 4, 14));
  a += dots('#d43', .7, ell(445, 1372, 10, 3, 5));
  [[492, 1248, 3], [564, 1318, 0], [578, 1370, 2], [413, 1340, 1], [413, 1371, 4], [457, 1386, 6], [458, 1308, 5]].forEach(function (l) { a += txt(l[0], l[1] + 3, l[2], 8, 'middle', '#555', 0, 700); });
  put('cat', 333, 1199, a);

  /* Continuous ------------------------------------------------------ */
  var b = embAxes();
  b += dots('#5a2d82', .75, ell(492, 1248, 26, 17, 190));
  b += dots('#5a2d82', .75, ell(558, 1322, 53, 29, 680));
  b += dots('#5a2d82', .75, chain([[583, 1352, 30], [582, 1378, 26], [580, 1400, 12]], 400));
  b += dots('#4fb87c', .75, chain([[397, 1350, 18], [415, 1344, 23], [425, 1335, 14], [410, 1358, 14]], 280));
  b += dots('#7fd48a', .75, ell(410, 1375, 21, 13, 90));
  b += dots('#a3d46a', .75, chain([[440, 1325, 1], [455, 1305, 2], [474, 1290, 1]], 26));
  b += dots('#4a6fa0', .8, ell(456, 1393, 3, 5, 10));
  put('cont', 333, 1199, b);

  /* Frequency ------------------------------------------------------- */
  var ft = 1223, fb = 1404, fz = function (z) { return 990 + z / 3; }, fd = [[805, 700], [917, 703], [1062, 873], [870, 737], [1138, 1053], [1000, 705], [930, 718], [1020, 738], [940, 725], [925, 700], [1050, 700], [1012, 700]];
  var fs = rect(709, 1214, 227, 199, '#f4f4f4');
  fd.forEach(function (v, i) {
    var x = 711.5 + i * 18.65, w = 16.5, by = fz(v[0]), gy = fz(v[1]);
    fs += rect(x, ft, w, gy - ft, '#f2917f') + rect(x, gy, w, by - gy, '#5cba60') + rect(x, by, w, fb - by, '#7facf6');
    fs += txt(x + 8, 1420, i + 1, 6.500, 'middle', '#555');
  });
  [0, .25, .5, .75, 1].forEach(function (p) { fs += txt(707, fb - p * 181 + 2, p, 3.500, 'end', '#aaa'); });
  fs += txt(694, 1310, 'Proportion', 6, 'middle', '#666', -90) + txt(818, 1431, 'Sample', 6.500, 'middle', '#666') + txt(957, 1295, 'Cell Set', 6, 'middle', '#666');
  fs += rect(945, 1307, 4, 4, '#7facf6') + rect(945, 1312, 4, 4, '#5cba60') + rect(945, 1317, 4, 4, '#f2917f');
  fs += txt(951, 1311, 'Cluster 0', 3.500) + txt(951, 1316, 'Cluster 1', 3.500) + txt(951, 1321, 'Cluster 2', 3.500);
  put('freq', 671.5, 1199, fs);

  /* Trajectory ------------------------------------------------------- */
  function tz(p) { return [1000 + p[0] / 1.568, 990 + p[1] / 3]; }
  var t = line(1043, 1223, 1043, 1415, '#555', 1) + line(1043, 1415, 1305, 1415, '#555', 1);
  t += txt(1040, 1273, '5', 5, 'end') + txt(1040, 1328, '0', 5, 'end') + txt(1040, 1383, '-5', 5, 'end');
  [[1099, '-4'], [1165, '0'], [1231, '4'], [1297, '8']].forEach(function (l) { t += txt(l[0], 1423, l[1], 5, 'middle'); });
  t += txt(1173, 1432, 'UMAP 1', 5.500, 'middle') + txt(1030, 1320, 'UMAP 2', 5.500, 'middle', '#333', -90);
  t += dots('#f7a0a6', .42, ell(1192, 1360, 37, 35, 1300));
  t += dots('#f08cc0', .42, ell(1170, 1340, 22, 18, 320));
  t += dots('#d45fb0', .42, ell(1142, 1365, 25, 31, 800));
  t += dots('#d42a8a', .5, ell(1140, 1388, 19, 11, 300));
  t += dots('#f8b070', .42, ell(1205, 1395, 28, 12, 280));
  t += dots('#f9b050', .45, chain([[1218, 1352, 4], [1272, 1354, 3]], 130));
  t += dots('#f8c840', .45, chain([[1232, 1370, 5], [1226, 1395, 5]], 110));
  t += dots('#9c3fc0', .5, chain([[1108, 1322, 8], [1148, 1330, 10], [1155, 1350, 7]], 520));
  t += dots('#3f1fa0', .5, chain([[1060, 1322, 7], [1080, 1322, 10], [1112, 1324, 7]], 620));
  t += dots('#6a30c0', .42, ell(1072, 1305, 14, 10, 40));
  t += dots('#f49090', .42, chain([[1195, 1330, 4], [1245, 1300, 7]], 200));
  t += dots('#f8a860', .42, chain([[1245, 1300, 7], [1270, 1272, 12]], 300));
  t += dots('#f8d840', .42, chain([[1270, 1272, 12], [1288, 1250, 8]], 200));
  t += dots('#f2f020', .5, chain([[1288, 1250, 8], [1262, 1235, 7], [1244, 1240, 4]], 300));
  var tl = [
    [[130, 1000], [170, 1000], [185, 1045], [225, 1050], [245, 1020], [265, 990], [298, 1017], [296, 1040], [325, 1060], [338, 1097], [370, 1085], [400, 1085], [370, 1165], [350, 1215], [292, 1215], [298, 1180], [265, 1140], [250, 1130], [250, 1110], [225, 1130], [225, 1160]],
    [[210, 1080], [225, 1130]],
    [[298, 1017], [390, 930], [415, 880], [440, 850], [450, 800], [440, 798]],
    [[296, 1040], [265, 1060], [250, 1110]],
    [[338, 1097], [325, 1130], [300, 1180]]
  ];
  tl.forEach(function (pts) {
    var out = [];
    for (var i = 0; i < pts.length - 1; i++) {
      var p = tz(pts[i]), q = tz(pts[i + 1]), n = Math.max(1, Math.round(Math.hypot(q[0] - p[0], q[1] - p[1]) / 5));
      for (var j = 0; j < n; j++) {
        var x = p[0] + (q[0] - p[0]) * j / n, y = p[1] + (q[1] - p[1]) * j / n;
        out.push(f(x) + ',' + f(y));
        out.push(f(x + (rnd() - .5) * 2.500 + (q[0] - p[0]) / n) + ',' + f(y));
      }
    }
    var e = tz(pts[pts.length - 1]); out.push(f(e[0]) + ',' + f(e[1]));
    t += '<polyline fill="none" stroke="#555" stroke-width="1" points="' + out.join(' ') + '"/>';
  });
  [[298, 1017], [296, 1040], [225, 1050], [338, 1097], [250, 1110], [225, 1130], [250, 1130], [325, 1130], [298, 1180]].forEach(function (p) { var q = tz(p); t += '<circle cx="' + f(q[0]) + '" cy="' + f(q[1]) + '" r="2" fill="#222"/>'; });
  [[130, 1000], [440, 798], [320, 1118], [243, 1145], [225, 1158]].forEach(function (p) { var q = tz(p); t += '<circle cx="' + f(q[0]) + '" cy="' + f(q[1]) + '" r="2.800" fill="#bbb" stroke="#444" stroke-width=".8"/>'; });
  put('traj', 1010, 1199, t);

  /* Marker heatmap ---------------------------------------------------- */
  function mx(z) { return 320 + z / 1.568; }
  function my(z) { return 1540 + z / 3; }
  var mEdges = [651, 723, 782, 831, 856, 876, 894, 909, 923], mCols = ['#e377c2', '#8c564b', '#d62728', '#2ca02c', '#ff7f0e', '#1f77b4', '#f5df19', '#3a5ff0'];
  var m = '';
  mCols.forEach(function (c, i) { m += rect(mx(mEdges[i]), my(243), mx(mEdges[i + 1]) - mx(mEdges[i]), 9, c); });
  m += rect(mx(651), my(280), mx(923) - mx(651), my(810) - my(280), '#e2cce6');
  var mRules = [
    [280, 332, 651, 723, .65, '#d68ec8'], [332, 375, 723, 831, .88, '#e24aa4'], [332, 375, 831, 909, .3, '#d884c4'], [332, 375, 651, 723, .1, '#d68ec8'],
    [375, 410, 723, 831, .7, '#d87cc0'], [410, 432, 723, 831, .5, '#d68ec8'], [438, 452, 651, 856, .85, '#d854a4'], [455, 482, 723, 831, .65, '#d87cc0'], [455, 482, 651, 723, .3, '#d68ec8'],
    [480, 545, 831, 856, .6, '#d874c0'], [480, 545, 651, 723, .12, '#d68ec8'], [545, 605, 856, 876, .75, '#d874c0'], [607, 675, 876, 894, .6, '#d68ec8'], [675, 695, 894, 909, .7, '#d87cc0'],
    [716, 730, 651, 723, .7, '#d874c0'], [716, 730, 831, 856, .97, '#cc1080'], [702, 728, 876, 909, .9, '#cc1a80'], [742, 810, 909, 923, .5, '#e24aa4'], [280, 330, 909, 923, .5, '#d874c0']
  ];
  mRules.forEach(function (q) {
    for (var y = q[0]; y < q[1]; y += 13) for (var x = q[2]; x < q[3]; x += 2.500) if (rnd() < q[4]) m += rect(mx(x), my(y), 1.300, 4.400, q[5], q[4] > .9 ? 0 : .72);
  });
  mEdges.slice(1, 8).forEach(function (e) { m += line(mx(e), my(280), mx(e), my(810), '#fff', .6); });
  var genes = 'Ccl7 Selenop Lyz1 Gm42418 Atp5e S100a9 S100a8 Tmem176b Cd52 Tmem176a Plac8 5830411N06Rik Cst3 Il1b Lilrb4 Mpo Ly6c2 Tuba1 Kifc1 Cebpe H2afv Ifitm6 Ccl3 Cd200r3 Cpa3 Fcer1a Prss34 Mcpt8 Ms4a2 Gata2 Car1 Klf1 Hba-a1 Car2 Gypa Cd79a Cd79b Ly6d Mzb1 Igkc Gm37376'.split(' ');
  genes.forEach(function (g2, i) { m += txt(mx(648), 1635.5 + i * 4.34, g2, 4.300, 'end', '#555'); });
  m += txt(mx(648), my(258), 'Louvain clusters', 4.500, 'end', '#555');
  m += txt(930, my(290), 'Cluster ID', 5.500, 'start', '#333', 0, 700);
  mCols.forEach(function (c, i) { var y = my(305) + i * 8.1; m += rect(931, y, 8, 6.500, c) + txt(941, y + 5, 'Cluster ' + i, 4.500, 'start', '#777'); });
  m += '<defs><linearGradient id="mg"><stop offset="0" stop-color="#e2cce6"/><stop offset=".55" stop-color="#e24aa4"/><stop offset="1" stop-color="#70002f"/></linearGradient></defs>';
  m += rect(mx(651), 1825, mx(923) - mx(651), 8, 'url(#mg)') + txt(mx(651), 1822, 'Intensity', 4.500, 'start', '#333', 0, 700);
  for (var mi = 0; mi <= 7; mi++) m += txt(mx(654 + mi * 38.6), 1839, mi, 4.500, 'middle', '#666');
  put('marker', 671.5, 1602, m);

  /* Custom heatmap ------------------------------------------------------ */
  var ch = txt(mx(1176), 1619, 'Cluster ID', 4.500, 'start', '#333', 0, 700);
  ['#ff1020', '#0a8010', '#1020f0', '#108080', '#ff9a20', '#7a1090', '#20f0f0'].forEach(function (c, i) { var x = mx(1176) + i * 15.7; ch += rect(x, 1622, 7.500, 7, c) + txt(x + 9, 1627.500, i, 4, 'start', '#666'); });
  [[1176, 1297, '#fa8088'], [1297, 1347, '#85bd80'], [1347, 1397, '#8590f5'], [1397, 1432, '#85bdb8'], [1432, 1448, '#fac078'], [1448, 1453, '#7fa6e6']].forEach(function (s) { ch += rect(mx(s[0]), 1633, mx(s[1]) - mx(s[0]), 9, s[2]); });
  ch += rect(mx(1176), 1647, mx(1453) - mx(1176), 191, '#9c7ba6');
  for (var ci = 0; ci < 30; ci++) ch += rect(mx(1176) + rnd() * 175, 1647, .5, 191, rnd() < .5 ? '#a58ab0' : '#94729f');
  [[1665, 'NPB2L3'], [1704, 'ATV2F'], [1742, 'URB3B1'], [1780, 'RAB7 VR'], [1818, 'CTB 11325.1']].forEach(function (l) { ch += txt(mx(1170), l[0] + 1.500, l[1], 4.500, 'end', '#666') + line(mx(1170), l[0], mx(1176), l[0], '#888', .5); });
  ch += txt(mx(1112), 1742, 'Gene', 4.500, 'middle', '#333', -90, 700);
  ch += txt(mx(1468), 1650, 'Normalized', 4.500, 'start', '#333', 0, 700) + txt(mx(1468), 1656, 'Expression', 4.500, 'start', '#333', 0, 700);
  ch += '<defs><linearGradient id="vg" x1="0" y1="0" x2="0" y2="1"><stop offset="0" stop-color="#f4e43c"/><stop offset=".3" stop-color="#55c667"/><stop offset=".55" stop-color="#25858e"/><stop offset=".8" stop-color="#3a4a8c"/><stop offset="1" stop-color="#440154"/></linearGradient></defs>';
  ch += rect(mx(1470), 1660, 7, 95, 'url(#vg)');
  [[1673, '6'], [1700, '4'], [1728, '2'], [1753, '0']].forEach(function (l) { ch += txt(mx(1470) + 9, l[0], l[1], 4, 'start', '#666'); });
  put('custom', 1010, 1602, ch);

  /* Violin ------------------------------------------------------------- */
  function vx(z) { return 1300 + z / 2.24; }
  function vy(z) { return 1540 + z / 3; }
  var v = txt(1506, 1635, 'Lyz2', 15, 'middle', '#222', 0, 700);
  ['6.5', '6.0', '5.5', '5.0', '4.5', '4.0', '3.5', '3.0', '2.5', '2.0', '1.5', '1.0', '0.5', '0.0'].forEach(function (l, i) {
    var y = vy([313, 352, 390, 428, 467, 505, 543, 582, 622, 660, 698, 736, 775, 813][i]);
    v += txt(vx(187), y + 1.500, l, 4.500, 'end', '#555') + line(vx(189), y, vx(193), y, '#555', .6);
  });
  v += line(vx(196), 1813, vx(765), 1813, '#888', .8);
  [[233, 675, '#e377c2'], [304, 670, '#8c564b'], [375, 685, '#d62728'], [446, 675, '#2ca02c'], [517, 465, '#ff7f0e']].forEach(function (o) {
    var c = vx(o[0]), w = 15.500, base = 1811, top = vy(o[1]), neck = vy(730);
    v += rect(c - .3, top, .6, neck - top, o[2], .45);
    var side = function (s) {
      return 'C' + f(c + s * w * .72) + ' ' + (base - 5) + ' ' + f(c + s * 8) + ' ' + (base - 10) + ' ' + f(c + s * 6) + ' ' + (base - 15);
    };
    v += '<path fill="' + o[2] + '" d="M' + f(c - w) + ' ' + base + side(-1) +
      'C' + f(c - 4) + ' ' + (base - 20) + ' ' + f(c - 2) + ' ' + (base - 24) + ' ' + f(c - .7) + ' ' + f(neck) +
      'L' + f(c + .7) + ' ' + f(neck) + 'C' + f(c + 2) + ' ' + (base - 24) + ' ' + f(c + 4) + ' ' + (base - 20) + ' ' + f(c + 6) + ' ' + (base - 15) +
      'C' + f(c + 8) + ' ' + (base - 10) + ' ' + f(c + w * .72) + ' ' + (base - 5) + ' ' + f(c + w) + ' ' + base + 'z"/>';
  });
  var vc = vx(589);
  v += '<path fill="#1f77b4" d="M' + (vc - 3.500) + ' ' + vy(332) + 'L' + (vc + 3.500) + ' ' + vy(332) + 'C' + (vc + 5.500) + ' ' + vy(390) + ' ' + (vc + 5.500) + ' ' + vy(440) + ' ' + (vc + 2.500) + ' ' + vy(520) + 'L' + (vc + .4) + ' ' + vy(695) + 'L' + (vc - .4) + ' ' + vy(695) + 'L' + (vc - 2.500) + ' ' + vy(520) + 'C' + (vc - 5.500) + ' ' + vy(440) + ' ' + (vc - 5.500) + ' ' + vy(390) + ' ' + (vc - 3.500) + ' ' + vy(332) + 'z"/>';
  v += rect(vx(197), 1809.500, vx(552) - vx(197), 2.500, '#111');
  [[625, 700], [730, 755]].forEach(function (s) { for (var x = s[0]; x < s[1]; x += 8) if (rnd() < .7) v += rect(vx(x), 1810, 1.500, 2, '#111'); });
  var out = [[208, 678], [233, 695], [245, 676], [258, 716], [280, 672], [294, 688], [320, 724], [342, 716], [374, 688], [374, 724], [475, 676], [479, 724], [531, 467], [560, 482], [553, 408], [560, 402], [570, 396], [562, 380], [565, 356], [573, 334], [578, 332], [581, 388], [560, 427], [577, 427], [586, 410], [598, 410], [598, 436], [608, 364], [616, 371], [612, 434], [614, 446], [619, 465], [622, 469], [614, 488], [620, 490], [574, 519], [583, 519], [560, 578], [578, 595], [588, 558], [560, 695]];
  v += dots('#222', .8, out.map(function (p) { return [vx(p[0]), vy(p[1])]; }));
  ['Cluster 0', 'Cluster 1', 'Cluster 2', 'Cluster 3', 'Cluster 4', 'Cluster 5', 'Cluster 6', 'Cluster 7'].forEach(function (l, i) {
    var x = vx(233 + i * 71.3); v += line(x, 1813, x, 1816, '#555', .6) + txt(x, 1822, l, 4.500, 'middle', '#555');
  });
  v += txt(vx(482), 1830, 'Louvain clusters', 4.800, 'middle', '#333') + txt(vx(162), 1728, 'Normalized Expression', 4.500, 'middle', '#333', -90, 700);
  put('violin', 1348.5, 1602, v);

  /* Dot plot ------------------------------------------------------------ */
  var dA = '#8f003f', dB = '#a8024f', dC = '#b00a55', dD = '#d01070', dE = '#e0267f', dF = '#e050a8', dG = '#d070c0', dH = '#c896d0', dI = '#d8b8e0', dJ = '#eee';
  var dp = [
    [[5, dE], [4, dF], [10, dA], [3.500, dH], [5, dE]], [[2.500, dG], [1.500, dG], [6.500, dH], [8, dE], [7, dB]], [[.8, dI], [2, dH], [1, dF], [2, dE], [2, dC]],
    [[8, dE], [5.500, dC], [7.500, dF], [.5, dJ], [2, dG]], [[4, dG], [8.500, dG], [2, dH], [6, dG], [1, dH]], [[10, dD], [.5, dJ], [2.500, dE], [3, dH], [7, dH]],
    [[2.500, dC], [10.500, dE], [5, dG], [9, dI], [6, dG]], [[3.500, dB], [.5, dJ], [1.200, dF], [6.500, dC], [6.500, dE]], [[8, dI], [9.500, dF], [1.800, dC], [4, dI], [2.500, dG]],
    [[.5, dJ], [5, dA], [.5, dJ], [4.500, dH], [6.500, dH]], [[7, dD], [4, dI], [6.500, dI], [5.500, dG], [10.500, dA]], [[5.500, dC], [10, '#e0d0e8'], [2.500, dG], [11, dA], [10.500, dB]],
    [[7.500, dG], [.5, dJ], [1.200, dE], [9, dD], [8.500, dH]], [[2, dH], [10, dH], [11.500, dE], [6.500, dG], [8.500, dD]]
  ];
  var dx = [1782, 1822, 1862, 1903, 1943], ds = line(1743, 1627, 1743, 1812, '#888', .8) + line(1743, 1812, 2010, 1812, '#888', .8);
  dp.forEach(function (row, i) {
    var y = 1639 + i * 12.4;
    ds += txt(1741, y + 1.500, 'cluster' + i, 5, 'end', '#555');
    row.forEach(function (o, j) { ds += '<circle cx="' + dx[j] + '" cy="' + f(y) + '" r="' + (o[0] * .72) + '" fill="' + o[1] + '"/>'; });
  });
  dx.forEach(function (x) { ds += txt(x + 2, 1820, 'Rgs1', 5, 'start', '#555', 55); });
  ds += txt(1711, 1720, 'Louvain clusters', 5, 'middle', '#333', -90, 700) + txt(1863, 1834, 'Gene names', 5, 'middle', '#333', 0, 700);
  put('dot', 1687, 1602, ds);

  /* Matrix --------------------------------------------------------------- */
  var mt = rect(345, 1933, 289, 17, '#d9d9d9') + rect(345, 1950, 44, 10, '#d9d9d9');
  var heads = ['AGTCAATTCTTG(-1)', 'AATGAACGTCGG(-1)', 'CATTGCAGGAATG(-1)', 'GACCCAGGTCA(-1)', 'GCGACTACTTGAT(-1)'], hx = [389, 438, 487, 536, 585];
  heads.forEach(function (h, i) {
    mt += txt(hx[i] + 24.500, 1943, h, 3.800, 'middle', '#444');
    mt += line(hx[i], 1933, hx[i], 1960, '#bbb', .5);
  });
  mt += txt(367, 1957, 'ENSMUSG01', 3.800, 'middle', '#333', 0, 700);
  ['0.1421870514', '0', '0', '0.0862431122', '0'].forEach(function (h, i) { mt += txt(hx[i] + 24.500, 1957, h, 3.800, 'middle', '#444'); });
  put('matrix', 333, 1923, mt);
})();
```
